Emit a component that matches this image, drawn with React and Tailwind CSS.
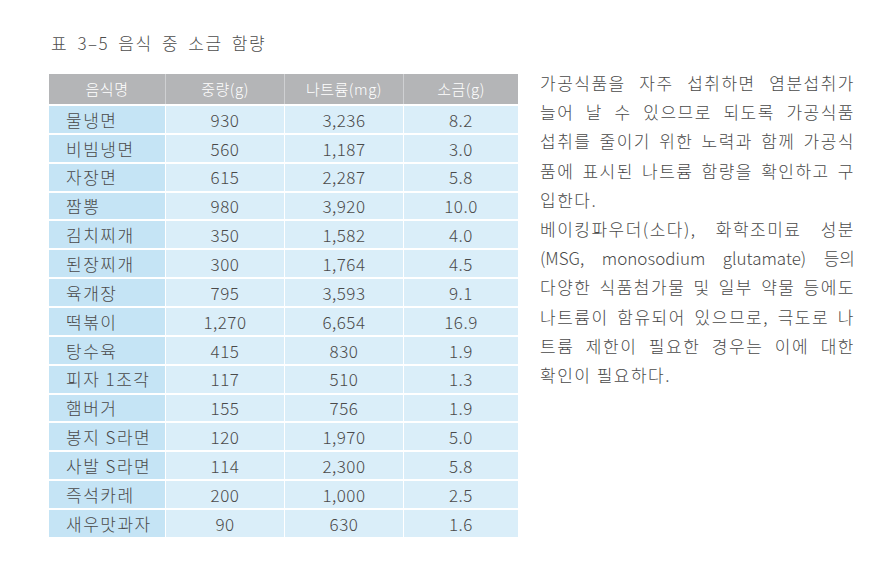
import React from "react";

const rows = [
  ["물냉면", "930", "3,236", "8.2"],
  ["비빔냉면", "560", "1,187", "3.0"],
  ["자장면", "615", "2,287", "5.8"],
  ["짬뽕", "980", "3,920", "10.0"],
  ["김치찌개", "350", "1,582", "4.0"],
  ["된장찌개", "300", "1,764", "4.5"],
  ["육개장", "795", "3,593", "9.1"],
  ["떡볶이", "1,270", "6,654", "16.9"],
  ["탕수육", "415", "830", "1.9"],
  ["피자 1조각", "117", "510", "1.3"],
  ["햄버거", "155", "756", "1.9"],
  ["봉지 S라면", "120", "1,970", "5.0"],
  ["사발 S라면", "114", "2,300", "5.8"],
  ["즉석카레", "200", "1,000", "2.5"],
  ["새우맛과자", "90", "630", "1.6"],
];

// each entry is one printed line; last: true marks a paragraph end
const lines = [
  { t: "가공식품을 자주 섭취하면 염분섭취가" },
  { t: "늘어 날 수 있으므로 되도록 가공식품" },
  { t: "섭취를 줄이기 위한 노력과 함께 가공식" },
  { t: "품에 표시된 나트륨 함량을 확인하고 구" },
  { t: "입한다.", last: true },
  { t: "베이킹파우더(소다), 화학조미료 성분" },
  { t: "(MSG, monosodium glutamate) 등의", latin: true },
  { t: "다양한 식품첨가물 및 일부 약물 등에도" },
  { t: "나트륨이 함유되어 있으므로, 극도로 나" },
  { t: "트륨 제한이 필요한 경우는 이에 대한" },
  { t: "확인이 필요하다.", last: true },
];

const font = { fontFamily: '"Noto Sans CJK KR", "Noto Sans", sans-serif' };

export default function App() {
  return (
    <div
      className="w-[889px] h-[571px] bg-white text-[#4a4a4a] font-light"
      style={font}
    >
      <div className="pt-[31px] pl-[51px] text-[17px] leading-[24px] tracking-[1.5px] [word-spacing:4px] text-[#4d4d4d]">
        표 3–5 음식 중 소금 함량
      </div>
      <div className="flex pl-[49px] pt-[19px]">
        <div className="w-[469px] text-[17px]">
          <div className="flex h-[30px] bg-[#b4b5b7] text-white text-[15px] tracking-[0.5px]">
            <div className="w-[116px] flex items-center justify-center">음식명</div>
            <div className="w-[119px] flex items-center justify-center border-l border-[#cfd0d2]">중량(g)</div>
            <div className="w-[119px] flex items-center justify-center border-l border-[#cfd0d2]">나트륨(mg)</div>
            <div className="w-[115px] flex items-center justify-center border-l border-[#cfd0d2]">소금(g)</div>
          </div>
          {rows.map((r) => (
            <div key={r[0]} className="flex h-[28.87px] border-t-2 border-white">
              <div className="w-[116px] flex items-center pl-[17px] bg-[#c5e4f5] tracking-[1.5px]">{r[0]}</div>
              <div className="w-[119px] flex items-center justify-center bg-[#daeef9] border-l border-white tracking-[0.5px]">{r[1]}</div>
              <div className="w-[119px] flex items-center justify-center bg-[#daeef9] border-l border-white tracking-[0.5px]">{r[2]}</div>
              <div className="w-[115px] flex items-center justify-center bg-[#daeef9] border-l border-white tracking-[0.5px]">{r[3]}</div>
            </div>
          ))}
        </div>
        <div className="ml-[22px] w-[315px] -mt-[6px] text-[17px] leading-[29.2px]">
          {lines.map((l, i) => (
            <div
              key={i}
              className={
                (l.latin ? "tracking-[0px] whitespace-nowrap " : "tracking-[1.5px] ") +
                (l.last ? "text-left" : "text-justify [text-align-last:justify]")
              }
            >
              {l.t}
            </div>
          ))}
        </div>
      </div>
    </div>
  );
}
